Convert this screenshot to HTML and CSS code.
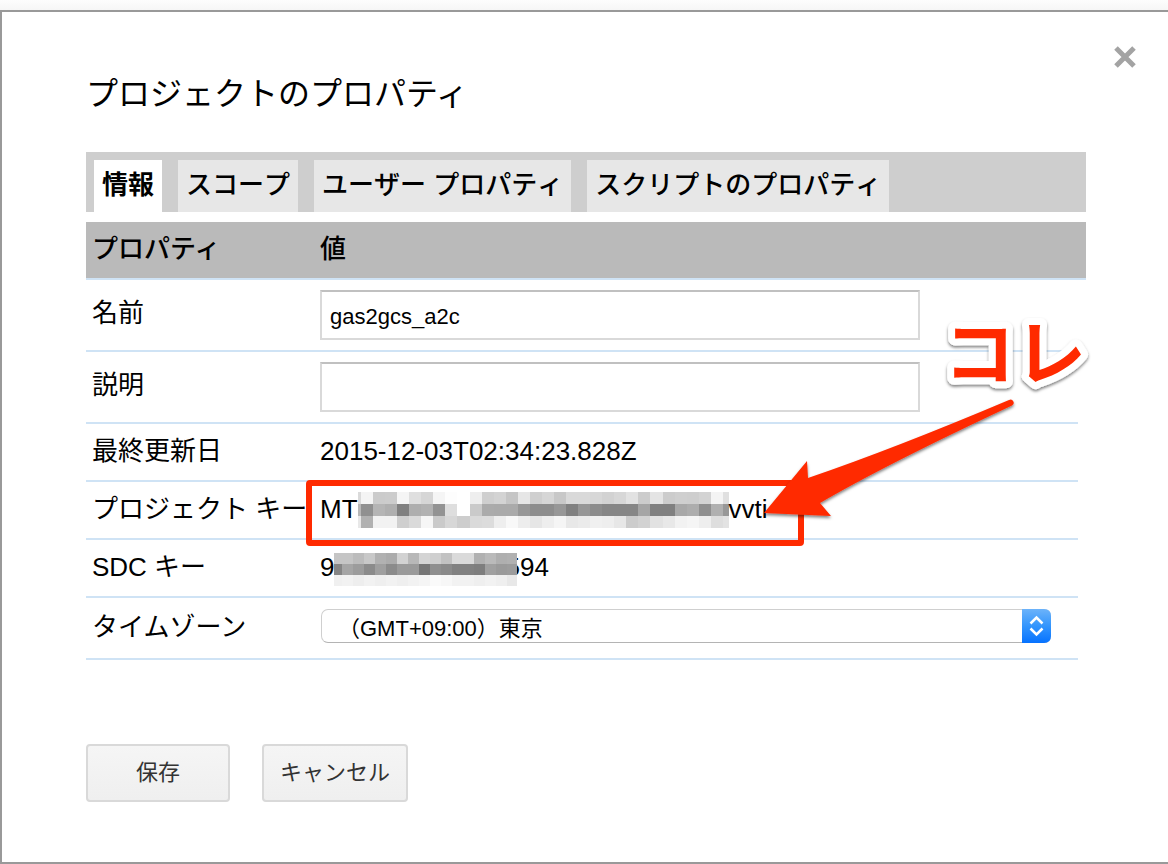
FILE: index.html
```html
<!DOCTYPE html>
<html lang="ja">
<head>
<meta charset="utf-8">
<title>プロジェクトのプロパティ</title>
<link rel="stylesheet" href="styles.css">
</head>
<body>
<main class="dialog" role="dialog" aria-labelledby="dialog-title">
  <header class="dialog-header">
    <h1 class="dialog-title" id="dialog-title">プロジェクトのプロパティ</h1>
    <button class="close" type="button" aria-label="閉じる">
      <svg width="22" height="22" viewBox="0 0 22 22" aria-hidden="true"><path d="M2 2L20 20M20 2L2 20" stroke="#a3a3a3" stroke-width="5"/></svg>
    </button>
  </header>

  <div class="tabs" role="tablist">
    <button class="tab tab-active" type="button" role="tab" aria-selected="true">情報</button>
    <button class="tab" type="button" role="tab">スコープ</button>
    <button class="tab" type="button" role="tab">ユーザー プロパティ</button>
    <button class="tab" type="button" role="tab">スクリプトのプロパティ</button>
  </div>

  <table class="properties">
    <colgroup><col class="col-name"><col><col class="col-edge"></colgroup>
    <thead>
      <tr><th scope="col">プロパティ</th><th scope="col" colspan="2">値</th></tr>
    </thead>
    <tbody>
      <tr class="row-field"><td><label for="name">名前</label></td><td><input class="field" id="name" type="text" value="gas2gcs_a2c"></td></tr>
      <tr class="row-field"><td><label for="description">説明</label></td><td><input class="field" id="description" type="text"></td></tr>
      <tr><td>最終更新日</td><td>2015-12-03T02:34:23.828Z</td></tr>
      <tr><td>プロジェクト キー</td><td><div class="secret">MT<svg class="mosaic" id="mosaic-key" width="371" height="38" aria-hidden="true"></svg>vvti</div></td></tr>
      <tr><td>SDC キー</td><td><div class="secret">9<svg class="mosaic mosaic-over" id="mosaic-sdc" width="183" height="38" aria-hidden="true"></svg>594</div></td></tr>
      <tr class="row-select"><td><label for="timezone">タイムゾーン</label></td><td>
        <div class="select-box">
          <select class="select" id="timezone"><option>（GMT+09:00）東京</option></select>
          <svg class="select-arrows" width="29" height="34" viewBox="0 0 29 34" aria-hidden="true">
            <defs><linearGradient id="blue" x1="0" y1="0" x2="0" y2="1"><stop offset="0" stop-color="#6cb3fa"/><stop offset=".5" stop-color="#3395fd"/><stop offset="1" stop-color="#0672ff"/></linearGradient></defs>
            <path d="M0 0H22Q29 0 29 7V27Q29 34 22 34H0Z" fill="url(#blue)"/>
            <path d="M8.500 14.500L14.500 8.500L20.500 14.500M8.500 19.500L14.500 25.500L20.500 19.500" fill="none" stroke="#fff" stroke-width="2.500"/>
          </svg>
        </div>
      </td></tr>
    </tbody>
  </table>

  <div class="actions">
    <button class="action" type="button">保存</button>
    <button class="action" type="button">キャンセル</button>
  </div>

  <svg class="callout" width="1100" height="560" viewBox="0 0 1100 560">
    <defs>
      <filter id="shadow" x="-10%" y="-10%" width="120%" height="130%"><feDropShadow dx="0" dy="2" stdDeviation="1.500" flood-color="#000" flood-opacity=".5"/></filter>
    </defs>
    <rect x="309" y="483" width="492" height="60" rx="1" fill="none" stroke="#ff2a00" stroke-width="6"/>
    <path d="M764 513L807 461L808 478Q893 449 1009 400A3 3 0 0 1 1012 405.500Q885 465 820 503L831 516Z" fill="#ff2a00" filter="url(#shadow)"/>
    <text class="callout-text" x="944" y="379" filter="url(#shadow)">コレ</text>
  </svg>
</main>
<script src="mosaic.js"></script>
</body>
</html>
```
FILE: styles.css
```css
* {
  box-sizing: border-box;
}

body {
  margin: 0;
  padding-top: 10px;
  background: linear-gradient(#fdfdfd, #f6f6f6 10px);
  color: #000;
  font-family: "Liberation Sans", "Noto Sans CJK JP", sans-serif;
  font-size: 26px;
}

button,
input,
select {
  font-family: inherit;
  color: inherit;
}

.dialog {
  position: relative;
  min-height: calc(100vh - 10px);
  padding: 32px 82px 60px 84px;
  border: 2px solid #999;
  border-right: 0;
  background: #fff;
}

.dialog-header {
  display: flex;
  justify-content: space-between;
  align-items: flex-start;
  margin-right: -50px;
}

.dialog-title {
  margin: 26px 0 34px;
  font-size: 32px;
  font-weight: 400;
  line-height: 48px;
}

.close {
  display: flex;
  padding: 2px 0;
  border: 0;
  background: none;
}

.tabs {
  display: flex;
  gap: 16px;
  padding: 8px 8px 0;
  margin-bottom: 10px;
  background: #cecece;
}

.tab {
  height: 52px;
  padding: 0 8px 8px;
  border: 0;
  background: #e7e7e7;
  font-size: 26px;
  font-weight: 500;
  font-kerning: none;
  white-space: nowrap;
}

.tab-active {
  background: #fff;
  font-weight: 700;
}

.properties {
  width: 100%;
  border-collapse: separate;
  border-spacing: 0;
  table-layout: fixed;
}

.col-name {
  width: 228px;
}

.col-edge {
  width: 8px;
}

.properties th,
.properties td {
  height: 58px;
  padding: 0 6px 2px;
  border-bottom: 2px solid #cfe3f5;
  line-height: 40px;
  text-align: left;
  white-space: nowrap;
}

.properties th {
  background: #bababa;
  font-weight: 500;
}

.properties .row-field td {
  height: 72px;
  padding-bottom: 4px;
}

.properties .row-field td + td {
  padding-bottom: 0;
}

.properties .row-select td {
  height: 62px;
}

.properties .row-select td + td {
  padding-bottom: 4px;
}

.field {
  display: block;
  width: 600px;
  max-width: 100%;
  height: 50px;
  padding: 4px 8px 0;
  border: 2px solid #d9d9d9;
  border-top-color: #c0c0c0;
  background: #fff;
  font-size: 22px;
}

.secret {
  display: flex;
  align-items: center;
}

.mosaic {
  flex: none;
}

.mosaic-over {
  z-index: 1;
  margin-right: -12px;
}

.select-box {
  position: relative;
  width: 730px;
  max-width: 100%;
  margin-left: 1px;
}

.select {
  display: block;
  width: 100%;
  height: 34px;
  padding: 6px 36px 0 16px;
  border: 1px solid #cfcfcf;
  border-bottom-color: #b4b4b4;
  border-radius: 7px;
  background: #fff;
  font-size: 22px;
  line-height: 26px;
  appearance: none;
}

.select-arrows {
  position: absolute;
  top: 0;
  right: 0;
  pointer-events: none;
}

.actions {
  display: flex;
  gap: 32px;
  margin-top: 84px;
}

.action {
  min-width: 144px;
  height: 58px;
  padding: 0 16px 6px;
  border: 2px solid #d9d9d9;
  border-radius: 4px;
  background: linear-gradient(#f5f5f5, #efefef);
  color: #333;
  font-size: 22px;
}

.callout {
  position: absolute;
  top: -12px;
  left: -2px;
  pointer-events: none;
}

.callout-text {
  fill: #ff2a00;
  stroke: #fff;
  stroke-width: 14px;
  stroke-linejoin: round;
  paint-order: stroke;
  font-family: "Noto Sans CJK JP", sans-serif;
  font-size: 71px;
  font-weight: 700;
}
```
FILE: mosaic.js
```js
// Each row lists grey levels; the first column is a partial block.
function drawMosaic(id, first, cellWidth, cellHeight, top, rows) {
  const svg = document.getElementById(id);
  rows.forEach((row, y) => {
    row.split(" ").forEach((level, i) => {
      const rect = document.createElementNS("http://www.w3.org/2000/svg", "rect");
      rect.setAttribute("x", i === 0 ? 0 : first + (i - 1) * cellWidth);
      rect.setAttribute("y", top + y * cellHeight);
      rect.setAttribute("width", i === 0 ? first : cellWidth);
      rect.setAttribute("height", cellHeight);
      rect.setAttribute("fill", "#" + level + level + level);
      rect.setAttribute("shape-rendering", "crispEdges");
      svg.appendChild(rect);
    });
  });
}

drawMosaic("mosaic-key", 3, 12.06, 12, 2, [
  "da f4 cb cc f5 df d6 f5 fd ff ee cf d3 c5 e6 cf d6 c8 d9 d9 d7 d2 d7 e2 cc e4 cc cf ce d3 f4 e0",
  "b8 90 b5 af 80 ae b2 93 de ff ca ab aa aa 97 8d 8d 97 80 96 8c 86 86 86 a5 80 80 a8 ad 8f b0 98",
  "e8 b1 f2 f2 cf da f6 ca d7 cd da dc ee f8 ed e6 ee f5 e8 eb f0 ee e7 cc d2 e2 e8 f2 f5 ee de e3"
]);
drawMosaic("mosaic-sdc", 8, 11, 11, 5, [
  "c5 c5 bc c8 b1 ac d2 b8 d4 cf c2 da da b1 ba af b1",
  "85 a5 9c 8b 9f 8b 9a 9a 76 8f 8a 81 81 7e a0 9a 9c",
  "f0 f2 ee f2 ef f2 ef f2 f5 fa f7 f2 f2 ef f2 ef e8"
]);
```
